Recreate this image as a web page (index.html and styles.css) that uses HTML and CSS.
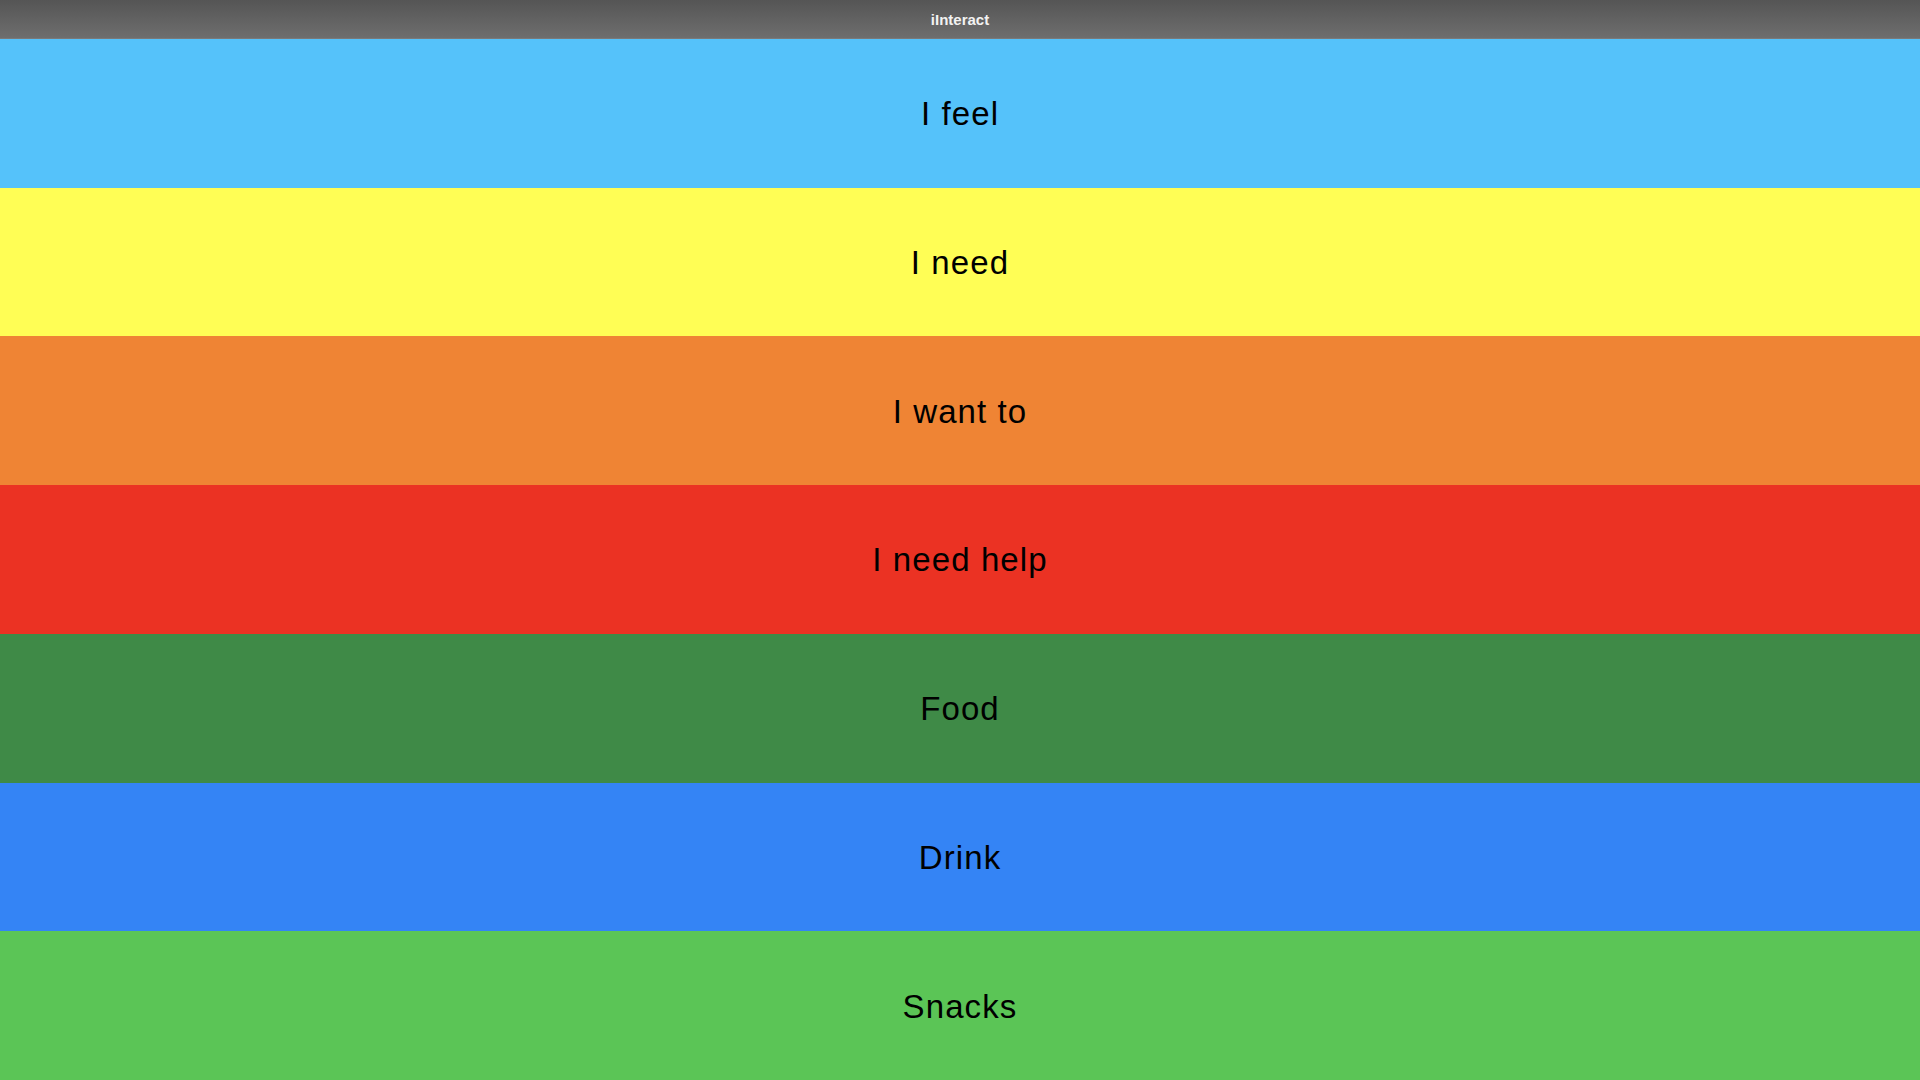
FILE: index.html
```html
<!DOCTYPE html>
<html>
<head>
<meta charset="utf-8">
<link rel="stylesheet" href="styles.css">
</head>
<body>
<div class="app">
  <header class="titlebar">iInteract</header>
  <main class="rows">
    <div class="row feel">I feel</div>
    <div class="row need">I need</div>
    <div class="row want">I want to</div>
    <div class="row help">I need help</div>
    <div class="row food">Food</div>
    <div class="row drink">Drink</div>
    <div class="row snacks">Snacks</div>
  </main>
</div>
</body>
</html>
```
FILE: styles.css
```css
html, body {
  margin: 0;
  padding: 0;
  height: 100%;
}
body {
  font-family: "Liberation Sans", Arial, sans-serif;
}
.app {
  display: flex;
  flex-direction: column;
  height: 1080px;
}
.titlebar {
  height: 38px;
  flex: 0 0 38px;
  background: linear-gradient(#555555, #6e6e6e);
  border-bottom: 1px solid #7a7a7a;
  color: #f2f2f2;
  font-weight: bold;
  font-size: 15px;
  display: flex;
  align-items: center;
  justify-content: center;
}
.rows {
  flex: 1;
  display: grid;
  grid-template-rows: repeat(7, 1fr);
}
.row {
  display: flex;
  align-items: center;
  justify-content: center;
  padding-top: 2px;
  font-size: 33px;
  color: #000;
  letter-spacing: 1.1px;
}
.feel { background: #55c2fa; }
.need { background: #fffe55; }
.want { background: #ef8434; }
.help { background: #eb3223; }
.food { background: #3f8a47; }
.drink { background: #3484f5; }
.snacks { background: #5bc556; }
```
